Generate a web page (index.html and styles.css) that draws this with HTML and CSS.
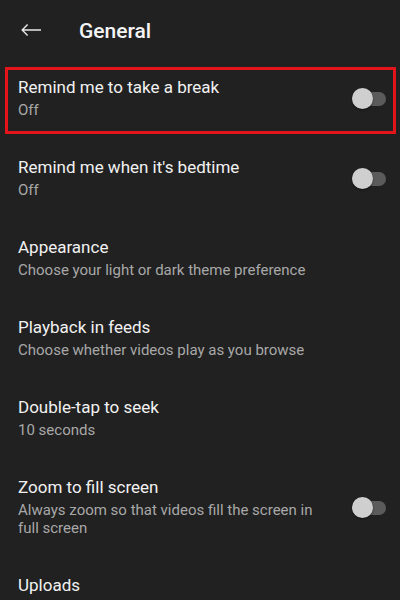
FILE: index.html
```html
<!DOCTYPE html>
<html>
<head>
<meta charset="utf-8">
<link rel="stylesheet" href="styles.css">
</head>
<body>
<div class="screen">
  <header class="header">
    <span class="back">
      <svg width="20" height="12" viewBox="0 0 20 12"><path d="M20 6H1.2M6.6 0.6L1.2 6L6.6 11.4" fill="none" stroke="#e8e8e8" stroke-width="1.4"/></svg>
    </span>
    <h1 class="title">General</h1>
  </header>
  <div class="list">
    <div class="item highlighted">
      <div class="text"><div class="label">Remind me to take a break</div><div class="sub">Off</div></div>
      <span class="switch"><span class="knob"></span></span>
      <span class="mark"></span>
    </div>
    <div class="item">
      <div class="text"><div class="label">Remind me when it's bedtime</div><div class="sub">Off</div></div>
      <span class="switch"><span class="knob"></span></span>
    </div>
    <div class="item">
      <div class="text"><div class="label">Appearance</div><div class="sub">Choose your light or dark theme preference</div></div>
    </div>
    <div class="item">
      <div class="text"><div class="label">Playback in feeds</div><div class="sub">Choose whether videos play as you browse</div></div>
    </div>
    <div class="item">
      <div class="text"><div class="label">Double-tap to seek</div><div class="sub">10 seconds</div></div>
    </div>
    <div class="item">
      <div class="text"><div class="label">Zoom to fill screen</div><div class="sub">Always zoom so that videos fill the screen in full screen</div></div>
      <span class="switch"><span class="knob"></span></span>
    </div>
    <div class="item">
      <div class="text"><div class="label">Uploads</div></div>
    </div>
  </div>
</div>
</body>
</html>
```
FILE: styles.css
```css
html, body {
  margin: 0;
  padding: 0;
  background: #212121;
}
.screen {
  width: 400px;
  height: 600px;
  overflow: hidden;
  background: #212121;
  font-family: Roboto, "Noto Sans", sans-serif;
  color: #f1f1f1;
}
.header {
  height: 52px;
  padding-top: 5px;
  display: flex;
  align-items: center;
}
.back {
  width: 20px;
  height: 12px;
  margin-left: 21px;
  margin-top: -2px;
  display: flex;
}
.title {
  margin: 0 0 0 38px;
  font-size: 21px;
  line-height: 28px;
  font-weight: 500;
  color: #f4f4f4;
}
.item {
  position: relative;
  display: flex;
  align-items: center;
  padding: 19px 14px 18px 18px;
}
.text {
  flex: 1;
  min-width: 0;
}
.label {
  font-size: 17px;
  line-height: 22px;
  color: #f1f1f1;
}
.sub {
  margin-top: 3px;
  font-size: 15px;
  line-height: 18px;
  color: #a8a8a8;
  padding-right: 10px;
}
.switch {
  position: relative;
  flex: none;
  width: 34px;
  height: 14px;
  border-radius: 7px;
  background: #5b5b5b;
  margin-left: 16px;
  margin-top: 2px;
}
.knob {
  position: absolute;
  left: 0;
  top: -4px;
  width: 21px;
  height: 21px;
  border-radius: 50%;
  background: #cfcfcf;
  box-shadow: 0 1px 2px rgba(0,0,0,0.5);
}
.mark {
  position: absolute;
  left: 5px;
  right: 4px;
  top: 10px;
  bottom: 3px;
  border: 3px solid #e3151b;
  pointer-events: none;
}
```
